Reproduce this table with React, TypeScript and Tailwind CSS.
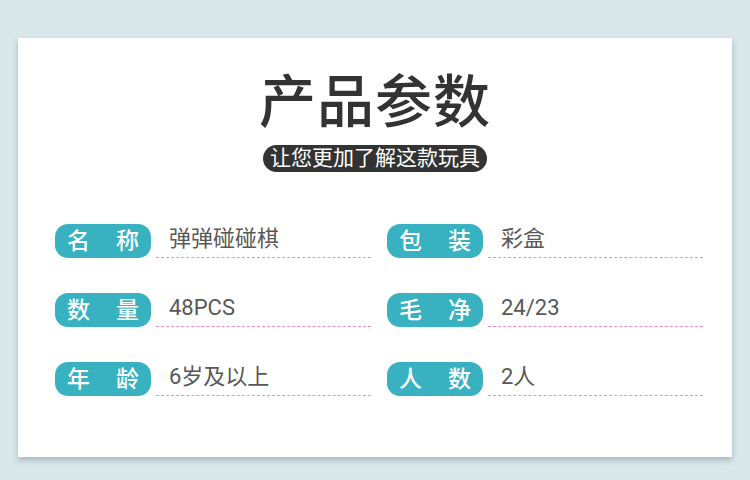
const rows: [string, string, string][] = [
  ["名", "称", "弹弹碰碰棋"],
  ["数", "量", "48PCS"],
  ["年", "龄", "6岁及以上"],
];

const rightRows: [string, string, string][] = [
  ["包", "装", "彩盒"],
  ["毛", "净", "24/23"],
  ["人", "数", "2人"],
];

function ParamItem({ a, b, value }: { a: string; b: string; value: string }) {
  return (
    <div className="flex items-stretch h-[34px]">
      {/* label pill */}
      <div className="w-[96px] shrink-0 rounded-[13px] bg-[#38b1c0] flex items-center justify-between px-[12px] text-white text-[23px] leading-none font-medium">
        <span>{a}</span>
        <span>{b}</span>
      </div>
      {/* value with dashed underline */}
      <div className="ml-[5px] w-[215px] flex items-center pl-[13px] pb-[3px] border-b border-dashed border-[#f48dac] text-[#585858] text-[22px] leading-none">
        {value}
      </div>
    </div>
  );
}

export default function App() {
  return (
    <div
      className="w-[750px] h-[480px] bg-[#dae8ec] pt-[38px] px-[18px]"
      style={{ fontFamily: 'Roboto, "Noto Sans CJK SC", sans-serif' }}
    >
      <div className="h-[419px] bg-white shadow-[0_3px_6px_rgba(60,80,85,0.35)] flex flex-col items-center pt-[36px]">
        {/* Title */}
        <h1 className="text-[57px] leading-none text-[#333333] font-medium tracking-[1px]">产品参数</h1>
        <div className="mt-[14px] h-[27px] px-[7px] rounded-full bg-[#333333] text-white text-[21px] leading-none flex items-center">
          让您更加了解这款玩具
        </div>

        {/* Params grid */}
        <div className="mt-[52px] self-start ml-[37px] grid grid-cols-[332px_332px] gap-y-[35px]">
          {rows.map((r, i) => (
            <>
              <ParamItem key={"l" + i} a={r[0]} b={r[1]} value={r[2]} />
              <ParamItem key={"r" + i} a={rightRows[i][0]} b={rightRows[i][1]} value={rightRows[i][2]} />
            </>
          ))}
        </div>
      </div>
    </div>
  );
}
